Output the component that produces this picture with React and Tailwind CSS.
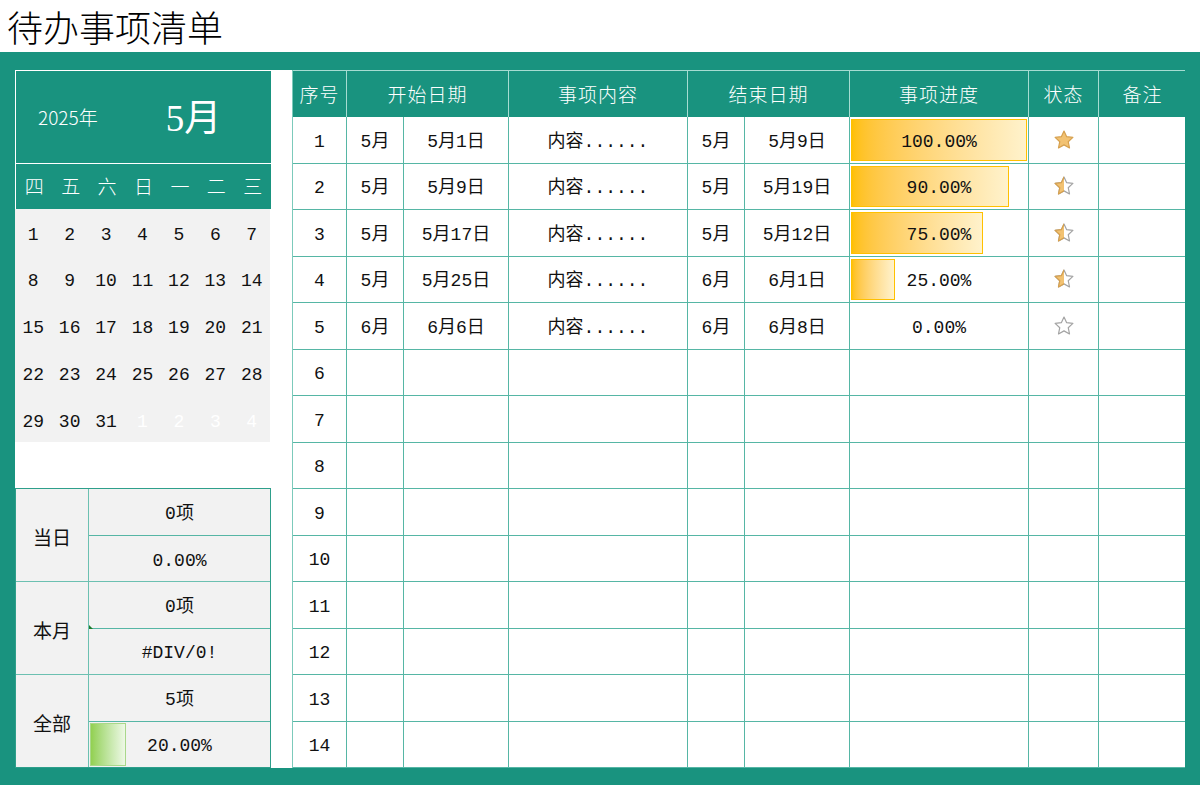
import { useId } from "react";

const TEAL = "bg-[#19937f]";

const tasks = [
  { no: 1, sm: "5月", sd: "5月1日", content: "内容......", em: "5月", ed: "5月9日", pct: 1 },
  { no: 2, sm: "5月", sd: "5月9日", content: "内容......", em: "5月", ed: "5月19日", pct: 0.9 },
  { no: 3, sm: "5月", sd: "5月17日", content: "内容......", em: "5月", ed: "5月12日", pct: 0.75 },
  { no: 4, sm: "5月", sd: "5月25日", content: "内容......", em: "6月", ed: "6月1日", pct: 0.25 },
  { no: 5, sm: "6月", sd: "6月6日", content: "内容......", em: "6月", ed: "6月8日", pct: 0 },
];

const rows = Array.from({ length: 14 }, (_, i) => tasks[i] || { no: i + 1 });

const weekDays = ["四", "五", "六", "日", "一", "二", "三"];
const days = [
  ...Array.from({ length: 31 }, (_, i) => ({ d: i + 1, cur: true })),
  ...[1, 2, 3, 4].map((d) => ({ d, cur: false })),
];

function Star({ mode }) {
  const id = useId();
  const pts = "12,2.2 14.9,8.4 21.7,9.2 16.6,13.9 18,20.7 12,17.3 6,20.7 7.4,13.9 2.3,9.2 9.1,8.4";
  return (
    <svg width="22" height="22" viewBox="0 0 24 24">
      <defs>
        <clipPath id={id}>
          <rect x="0" y="0" width="12" height="24" />
        </clipPath>
      </defs>
      {mode === "full" ? (
        <polygon points={pts} fill="#f2c272" stroke="#d6a04e" strokeWidth="1.3" strokeLinejoin="round" />
      ) : (
        <>
          <polygon points={pts} fill="#ffffff" stroke="#a3a3a3" strokeWidth="1.3" strokeLinejoin="round" />
          {mode === "half" && (
            <polygon
              points={pts}
              fill="#f2c272"
              stroke="#d6a04e"
              strokeWidth="1.3"
              strokeLinejoin="round"
              clipPath={`url(#${id})`}
            />
          )}
        </>
      )}
    </svg>
  );
}

function Cell({ w, children, last, className = "" }) {
  return (
    <div
      className={`${w} shrink-0 h-full flex items-center justify-center pt-[5px] ${last ? "" : "border-r border-[#56b6a5]"} ${className}`}
    >
      {children}
    </div>
  );
}

function HeadCell({ w, children, last }) {
  return (
    <div
      className={`${w} shrink-0 h-full flex items-center justify-center tracking-[1px] ${last ? "" : "border-r border-[#a6dcd2]"}`}
    >
      {children}
    </div>
  );
}

export default function App() {
  return (
    <div
      className="w-[1200px] h-[785px] bg-white text-[#111]"
      style={{ fontFamily: '"Liberation Mono", "Noto Sans CJK SC", monospace' }}
    >
      <div
        className="h-[52px] pl-[7px] text-[36px] font-light leading-[52px] text-black"
        style={{ fontFamily: '"Noto Sans CJK SC", sans-serif' }}
      >
        待办事项清单
      </div>

      <div className={`${TEAL} h-[733px] pt-[18px] pl-[15px] pr-[15px] pb-[17px]`}>
        <div className="bg-white h-full flex">
          {/* left panel */}
          <div className="w-[256px] shrink-0 flex flex-col">
            <div
              className={`${TEAL} h-[93px] border-t border-l border-white flex items-center text-white`}
              style={{ fontFamily: '"Noto Sans CJK SC", sans-serif' }}
            >
              <span className="pl-[22px] text-[19px] font-light">2025年</span>
              <span
                className="ml-[68px] text-[37px] leading-none pt-[4px]"
                style={{ fontFamily: '"Liberation Serif", "Noto Sans CJK SC", serif' }}
              >
                5月
              </span>
            </div>
            <div
              className={`${TEAL} h-[46px] border-t border-l border-white grid grid-cols-7 text-white text-[19px] font-light`}
              style={{ fontFamily: '"Noto Sans CJK SC", sans-serif' }}
            >
              {weekDays.map((w) => (
                <div key={w} className="flex items-center justify-center">{w}</div>
              ))}
            </div>
            <div className="bg-[#f2f2f2] h-[234px] w-[255px] grid grid-cols-7 grid-rows-5 text-[18px]">
              {days.map((x, i) => (
                <div
                  key={i}
                  className={`flex items-center justify-center pt-[6px] ${x.cur ? "text-[#111]" : "text-white"}`}
                >
                  {x.d}
                </div>
              ))}
            </div>
            <div className="h-[46px]" />
            <div className="h-[280px] w-[256px] border border-[#2e9f8b] bg-[#f2f2f2] flex flex-col text-[18px]">
              {[
                ["当日", "0项", "0.00%", 0],
                ["本月", "0项", "#DIV/0!", 0],
                ["全部", "5项", "20.00%", 0.2],
              ].map(([label, a, b, p], i) => (
                <div key={label} className={`flex-1 flex ${i < 2 ? "border-b border-[#6cc0b1]" : ""}`}>
                  <div
                    className="w-[73px] shrink-0 border-r border-[#6cc0b1] flex items-center justify-center text-[19px] pt-[4px]"
                    style={{ fontFamily: '"Noto Sans CJK SC", sans-serif' }}
                  >
                    {label}
                  </div>
                  <div className="flex-1 flex flex-col">
                    <div className="flex-1 flex items-center justify-center pt-[5px] border-b border-[#56b6a5] relative">
                      {a}
                      {i === 1 && (
                        <div className="absolute left-0 -bottom-[1px] w-0 h-0 border-t-[4px] border-t-transparent border-l-[4px] border-l-[#1e7d2e]" />
                      )}
                    </div>
                    <div className="flex-1 flex items-center justify-center pt-[5px] relative">
                      {p > 0 && (
                        <div
                          className="absolute left-[1px] top-[1px] bottom-[1px] border border-[#a9d88a] bg-linear-to-r from-[#92d050] to-[#eef8e6]"
                          style={{ width: `${p * 180}px` }}
                        />
                      )}
                      <span className="relative">{b}</span>
                    </div>
                  </div>
                </div>
              ))}
            </div>
          </div>

          <div className="w-[21px] shrink-0" />

          {/* table */}
          <div className="w-[893px] shrink-0 flex flex-col border-l border-[#7ccabb]">
            <div
              className={`${TEAL} h-[47px] flex text-white text-[19px] font-light border-t border-[#a6dcd2]`}
              style={{ fontFamily: '"Noto Sans CJK SC", sans-serif' }}
            >
              <HeadCell w="w-[54px]">序号</HeadCell>
              <HeadCell w="w-[162px]">开始日期</HeadCell>
              <HeadCell w="w-[179px]">事项内容</HeadCell>
              <HeadCell w="w-[162px]">结束日期</HeadCell>
              <HeadCell w="w-[179px]">事项进度</HeadCell>
              <HeadCell w="w-[70px]">状态</HeadCell>
              <HeadCell w="w-[87px]" last>备注</HeadCell>
            </div>
            {rows.map((r) => (
              <div key={r.no} className="h-[46.5px] flex border-b border-[#56b6a5] text-[18px]">
                <Cell w="w-[54px]">{r.no}</Cell>
                <Cell w="w-[57px]">{r.sm}</Cell>
                <Cell w="w-[105px]">{r.sd}</Cell>
                <Cell w="w-[179px]">{r.content}</Cell>
                <Cell w="w-[57px]">{r.em}</Cell>
                <Cell w="w-[105px]">{r.ed}</Cell>
                <Cell w="w-[179px]" className="relative">
                  {r.pct !== undefined && (
                    <>
                      {r.pct > 0 && (
                        <div
                          className="absolute left-[1px] top-[2px] bottom-[2px] border border-[#ffc000] bg-linear-to-r from-[#ffc000] to-[#fff2cc]"
                          style={{ width: `${r.pct * 176}px` }}
                        />
                      )}
                      <span className="relative">{(r.pct * 100).toFixed(2)}%</span>
                    </>
                  )}
                </Cell>
                <Cell w="w-[70px]" className="!pt-0">
                  {r.pct !== undefined && <Star mode={r.pct >= 1 ? "full" : r.pct > 0 ? "half" : "empty"} />}
                </Cell>
                <Cell w="w-[87px]" last />
              </div>
            ))}
          </div>
        </div>
      </div>
    </div>
  );
}
